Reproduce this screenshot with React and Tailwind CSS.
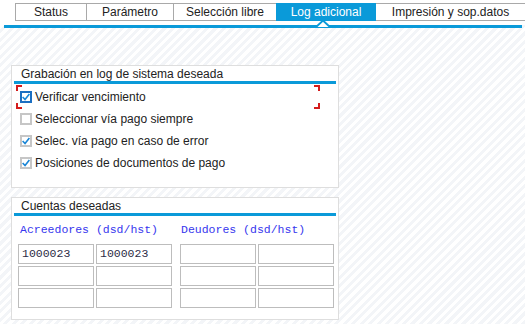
import React from "react";

const tabs = [
  { label: "Status", w: "w-[70px]" },
  { label: "Parámetro", w: "w-[87px]" },
  { label: "Selección libre", w: "w-[103px]" },
  { label: "Log adicional", w: "w-[100px]", active: true },
  { label: "Impresión y sop.datos", w: "w-[149px]" },
];

const options = [
  { label: "Verificar vencimiento", checked: true, focused: true },
  { label: "Seleccionar vía pago siempre", checked: false },
  { label: "Selec. vía pago en caso de error", checked: true },
  { label: "Posiciones de documentos de pago", checked: true },
];

const Check = ({ checked, focused }) => (
  <div
    className={`w-[12px] h-[12px] flex items-center justify-center ${
      focused ? "border-2 border-[#1b6fc2] bg-white" : "border-2 border-[#c6c6c6] bg-white"
    }`}
  >
    {checked && (
      <svg width="10" height="10" viewBox="0 0 10 10">
        <path d="M0.8 5 L3.8 8.2 L9.2 1.2" fill="none" stroke="#1a86d6" strokeWidth="2" />
      </svg>
    )}
  </div>
);

const Corner = ({ className }) => <div className={`absolute w-[6px] h-[6px] border-[#d41c1c] ${className}`} />;

const Field = ({ value, w }) => (
  <div className={`${w} h-[20px] border border-[#bdbdbd] bg-white flex items-center pl-[3px] font-['Liberation_Mono',monospace] text-[11.5px] text-[#2b2b45]`}>
    {value}
  </div>
);

const Panel = ({ title, children, className }) => (
  <div className={`w-[328px] bg-white border border-[#dedede] ${className}`}>
    <div className="mx-[2px] h-[18px] border-b-[3px] border-[#0a9ad9] pl-[7px] flex items-center text-[12px] text-[#222]">
      {title}
    </div>
    {children}
  </div>
);

export default function App() {
  return (
    <div className="w-[525px] h-[324px] overflow-hidden relative font-['Liberation_Sans',Arial,sans-serif] bg-[repeating-linear-gradient(135deg,#ffffff_0px,#ffffff_3px,#f3f5f8_3px,#f3f5f8_6px)]">
      <div className="bg-white h-[25px] pt-[3px] pl-[15px]">
        <div className="flex h-[18px] border border-[#a9a9a9] w-fit bg-white">
          {tabs.map((t, i) => (
            <div
              key={t.label}
              className={`${t.w} flex items-center justify-center text-[12px] ${
                t.active ? "bg-[#0a9ad9] text-white -my-px h-[18px]" : "text-[#222]"
              } ${i > 0 && !t.active && !tabs[i - 1].active ? "border-l border-[#a9a9a9]" : ""}`}
            >
              {t.label}
            </div>
          ))}
        </div>
      </div>
      <div className="ml-[4px] w-[518px] h-[3px] bg-[#0a9ad9]" />
      <svg className="absolute left-[316px] top-[19px]" width="14" height="9" viewBox="0 0 14 9">
        <path d="M0 8 L7 1.5 L14 8" fill="#ffffff" stroke="#0a9ad9" strokeWidth="2" />
      </svg>

      <div className="pl-[11px] pt-[37px]">
        <Panel title="Grabación en log de sistema deseada" className="h-[123px]">
          <div className="relative pt-[2px] pl-[8px] flex flex-col">
            <Corner className="left-[4px] top-[1px] border-l-2 border-t-2" />
            <Corner className="left-[4px] top-[19px] border-l-2 border-b-2" />
            <Corner className="left-[302px] top-[1px] border-r-2 border-t-2" />
            <Corner className="left-[302px] top-[19px] border-r-2 border-b-2" />
            {options.map((o) => (
              <div key={o.label} className="h-[22px] flex items-center gap-[3px] text-[12px] text-[#222]">
                <Check checked={o.checked} focused={o.focused} />
                <span>{o.label}</span>
              </div>
            ))}
          </div>
        </Panel>

        <Panel title="Cuentas deseadas" className="h-[123px] mt-[9px]">
          <div className="pl-[6px] pt-[6px]">
            <div className="flex h-[16px] items-center font-['Liberation_Mono',monospace] text-[11.5px] text-[#3636ee]">
              <span className="w-[161px] pl-[2px]">Acreedores (dsd/hst)</span>
              <span className="pl-[2px]">Deudores (dsd/hst)</span>
            </div>
            <div className="flex flex-col gap-[2px] mt-[6px]">
              {[["1000023", "1000023"], ["", ""], ["", ""]].map((row, i) => (
                <div key={i} className="flex">
                  <Field value={row[0]} w="w-[76px]" />
                  <div className="w-[2px]" />
                  <Field value={row[1]} w="w-[76px]" />
                  <div className="w-[8px]" />
                  <Field value="" w="w-[76px]" />
                  <div className="w-[2px]" />
                  <Field value="" w="w-[76px]" />
                </div>
              ))}
            </div>
          </div>
        </Panel>
      </div>
    </div>
  );
}
